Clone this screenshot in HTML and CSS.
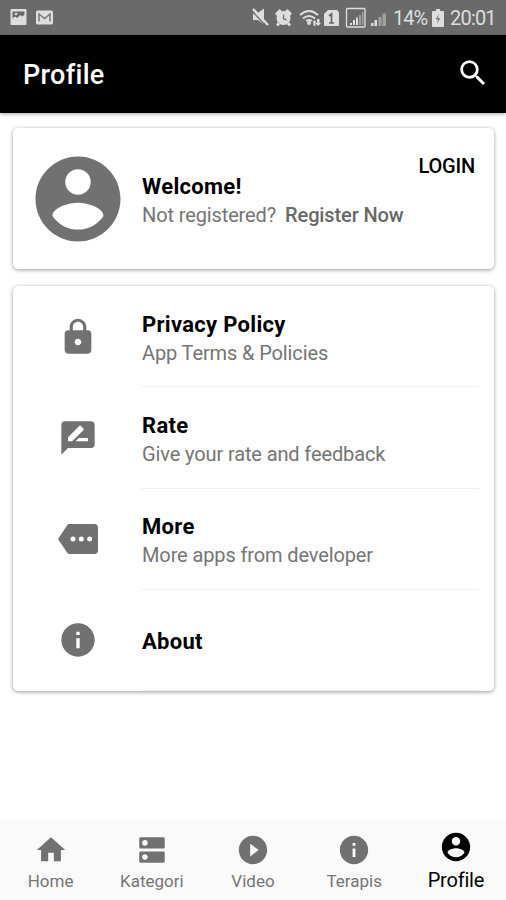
FILE: index.html
```html
<!DOCTYPE html>
<html lang="en">
<head>
<meta charset="utf-8">
<title>Profile</title>
<link rel="stylesheet" href="styles.css">
</head>
<body>
<div class="status">
  <svg class="notices" viewBox="0 0 44 16"><path fill="#dedede" fill-rule="evenodd" d="M1.500 0h14a1 1 0 0 1 1 1v14a1 1 0 0 1-1 1h-14a1 1 0 0 1-1-1v-14a1 1 0 0 1 1-1zM2.500 2.500v7l2.500-2 2 1.500 3.500-3 2 1.500 2-2V2.500z"/><circle cx="6" cy="5" r="1.300" fill="#dedede"/><rect x="26" y="1.500" width="17" height="14" rx="1.500" fill="#dedede"/><path d="M29 12.500V5l5.500 4.500L40 5v7.500" fill="none" stroke="#777" stroke-width="1.500"/></svg>
  <div class="indicators">
    <svg class="system" viewBox="0 0 136 22">
      <g fill="#dedede">
        <path d="M1 7.500h4L12 2.500v16l-6-4.500H1z"/>
        <circle cx="31.500" cy="12" r="7"/>
        <path d="M23 7.500 27.500 3l2.500 2-5 5zM40 7.500 35.500 3 33 5l5 5zM26 16l2 2.500-2 2L24 18.500zM37 16l-2 2.500 2 2 2-2z"/>
        <circle cx="57" cy="17" r="2"/>
        <path d="M65 13h2.500v4H69l-3 3-2.500-3H65zM61.500 20v-3.500H60.500l2-2.500 2 2.500h-1V20z"/>
        <path d="M76 4h9l2 2.500V19a1 1 0 0 1-1 1H73a1 1 0 0 1-1-1V8z"/>
        <path d="M98 17h2v2h-2zM101 14h2v5h-2zM104 11.500h2V19h-2zM119 17h2.500v3H119zM122.500 14h2.500v6h-2.500z"/>
      </g>
      <path d="M107 9h2v10h-2zM110 6h1.500v13H110zM126.500 11h3v9h-3zM130.500 7.500h3.500V20h-3.500z" fill="#a0a0a0"/>
      <path d="m0 5 14 15" stroke="#6a6a6a" stroke-width="1.200"/>
      <path d="m1 3 15 16" stroke="#dedede" stroke-width="2.400"/>
      <path d="M31.500 8.500v4l3 1.500" fill="none" stroke="#777" stroke-width="1.400"/>
      <path d="M48 9q9-8 18 0M51 12.500q6-5 12 0M54 15q3-2 6 0" fill="none" stroke="#dedede" stroke-width="2"/>
      <path d="m77 10 2.500-2v9M77 17h5" fill="none" stroke="#666" stroke-width="1.700"/>
      <rect x="94.500" y="2.500" width="18.500" height="18.500" rx="1" fill="none" stroke="#dedede" stroke-width="1.300"/>
    </svg>
    <span class="percent">14%</span>
    <svg class="battery" viewBox="0 0 12 18"><path fill="#dedede" d="M4 0h4v2h3q1 0 1 1v14q0 1-1 1H1q-1 0-1-1V3q0-1 1-1h3z"/><path d="m7 4.500-3.500 6H6L5 15l3.500-6H6z" fill="#808080"/></svg>
    <span class="clock">20:01</span>
  </div>
</div>
<header class="bar">
  <h1 class="bar-title">Profile</h1>
  <svg class="search" viewBox="0 0 24 24"><path d="M15.500 14h-.79l-.28-.27A6.471 6.471 0 0 0 16 9.500 6.500 6.500 0 1 0 9.500 16c1.610 0 3.090-.59 4.230-1.570l.27.28v.79l5 4.990L20.490 19l-4.990-5zm-6 0C7.010 14 5 11.990 5 9.500S7.010 5 9.500 5 14 7.010 14 9.500 11.990 14 9.500 14z"/></svg>
</header>
<main class="content">
  <section class="card account">
    <svg class="avatar" viewBox="0 0 24 24"><path d="M12 2C6.480 2 2 6.480 2 12s4.480 10 10 10 10-4.480 10-10S17.520 2 12 2zm0 3c1.660 0 3 1.340 3 3s-1.340 3-3 3-3-1.340-3-3 1.340-3 3-3zm0 14.200c-2.500 0-4.710-1.280-6-3.220.03-1.990 4-3.080 6-3.080 1.990 0 5.970 1.090 6 3.080-1.290 1.940-3.500 3.220-6 3.220z"/></svg>
    <div class="greeting">
      <h2 class="title">Welcome!</h2>
      <p class="sub"><span>Not registered?</span><b class="register">Register Now</b></p>
    </div>
    <span class="login">LOGIN</span>
  </section>
  <section class="card menu">
    <div class="row">
      <svg class="icon" viewBox="0 0 24 24"><path d="M18 8h-1V6c0-2.760-2.240-5-5-5S7 3.240 7 6v2H6c-1.100 0-2 .9-2 2v10c0 1.100.9 2 2 2h12c1.100 0 2-.9 2-2V10c0-1.100-.9-2-2-2zm-6 9c-1.100 0-2-.9-2-2s.9-2 2-2 2 .9 2 2-.9 2-2 2zm3.100-9H8.900V6c0-1.710 1.390-3.100 3.100-3.100 1.710 0 3.100 1.390 3.100 3.100v2z"/></svg>
      <div class="text"><h2 class="title">Privacy Policy</h2><p class="sub">App Terms &amp; Policies</p></div>
    </div>
    <div class="row">
      <svg class="icon" viewBox="0 0 24 24"><path d="M20 2H4c-1.100 0-1.990.9-1.990 2L2 22l4-4h14c1.100 0 2-.9 2-2V4c0-1.100-.9-2-2-2zM6 14v-2.470l6.880-6.880c.2-.2.510-.2.710 0l1.770 1.770c.2.2.2.510 0 .710L8.470 14H6zm12 0h-7.500l2-2H18v2z"/></svg>
      <div class="text"><h2 class="title">Rate</h2><p class="sub">Give your rate and feedback</p></div>
    </div>
    <div class="row">
      <svg class="icon" viewBox="0 0 24 24"><path fill-rule="evenodd" d="M22 3H7c-.69 0-1.230.35-1.590.88L0 12l5.410 8.110c.36.53.97.89 1.660.89H22c1.100 0 2-.9 2-2V5c0-1.100-.9-2-2-2zM9 13.500a1.500 1.500 0 1 1 0-3 1.500 1.500 0 0 1 0 3zm5 0a1.500 1.500 0 1 1 0-3 1.500 1.500 0 0 1 0 3zm5 0a1.500 1.500 0 1 1 0-3 1.500 1.500 0 0 1 0 3z"/></svg>
      <div class="text"><h2 class="title">More</h2><p class="sub">More apps from developer</p></div>
    </div>
    <div class="row">
      <svg class="icon" viewBox="0 0 24 24"><path d="M12 2C6.480 2 2 6.480 2 12s4.480 10 10 10 10-4.480 10-10S17.520 2 12 2zm1 15h-2v-6h2v6zm0-8h-2V7h2v2z"/></svg>
      <div class="text single"><h2 class="title">About</h2></div>
    </div>
  </section>
</main>
<nav class="tabs">
  <div class="tab"><svg class="tab-icon" viewBox="0 0 24 24"><path d="M10 20v-6h4v6h5v-8h3L12 3 2 12h3v8z"/></svg><span>Home</span></div>
  <div class="tab"><svg class="tab-icon" viewBox="0 0 24 24"><path d="M20 13H4c-.55 0-1 .45-1 1v6c0 .55.45 1 1 1h16c.55 0 1-.45 1-1v-6c0-.55-.45-1-1-1zM7 19c-1.100 0-2-.9-2-2s.9-2 2-2 2 .9 2 2-.9 2-2 2zM20 3H4c-.55 0-1 .45-1 1v6c0 .55.45 1 1 1h16c.55 0 1-.45 1-1V4c0-.55-.45-1-1-1zM7 9c-1.100 0-2-.9-2-2s.9-2 2-2 2 .9 2 2-.9 2-2 2z"/></svg><span>Kategori</span></div>
  <div class="tab"><svg class="tab-icon" viewBox="0 0 24 24"><path d="M12 2C6.480 2 2 6.480 2 12s4.480 10 10 10 10-4.480 10-10S17.520 2 12 2zm-2 14.500v-9l6 4.500-6 4.500z"/></svg><span>Video</span></div>
  <div class="tab"><svg class="tab-icon" viewBox="0 0 24 24"><path d="M12 2C6.480 2 2 6.480 2 12s4.480 10 10 10 10-4.480 10-10S17.520 2 12 2zm1 15h-2v-6h2v6zm0-8h-2V7h2v2z"/></svg><span>Terapis</span></div>
  <div class="tab active"><svg class="tab-icon" viewBox="0 0 24 24"><path d="M12 2C6.480 2 2 6.480 2 12s4.480 10 10 10 10-4.480 10-10S17.520 2 12 2zm0 3c1.660 0 3 1.340 3 3s-1.340 3-3 3-3-1.340-3-3 1.340-3 3-3zm0 14.200c-2.500 0-4.710-1.280-6-3.220.03-1.990 4-3.080 6-3.080 1.990 0 5.970 1.090 6 3.080-1.290 1.940-3.500 3.220-6 3.220z"/></svg><span>Profile</span></div>
</nav>
</body>
</html>
```
FILE: styles.css
```css
* { box-sizing: border-box; margin: 0; padding: 0; }
body {
  width: 506px;
  height: 900px;
  display: flex;
  flex-direction: column;
  overflow: hidden;
  background: #fff;
  font-family: Roboto, sans-serif;
  color: #000;
}
svg { display: block; flex: none; }
.status {
  height: 35px;
  display: flex;
  justify-content: space-between;
  padding: 0 11px 0 10px;
  background: #6a6a6a;
  color: #dedede;
}
.notices { width: 44px; height: 16px; margin-top: 9px; }
.indicators { display: flex; align-items: center; font-size: 20px; }
.system { width: 136px; height: 22px; margin-top: -1px; margin-right: 5px; }
.percent { width: 34px; margin-right: 5px; letter-spacing: -1px; }
.battery { width: 12px; height: 18px; margin-right: 6px; }
.clock { width: 45px; letter-spacing: -0.8px; }
.bar {
  height: 78px;
  display: flex;
  align-items: center;
  justify-content: space-between;
  padding: 0 16px 0 23px;
  background: #000;
  color: #fff;
  box-shadow: 0 1px 4px rgba(0, 0, 0, .35);
}
.bar-title { margin-top: 2px; font-size: 27px; font-weight: 500; letter-spacing: 0.3px; }
.search { width: 34px; height: 34px; margin-top: -2px; fill: #fff; }
.content { flex: 1; padding: 15px 12px 0 13px; display: flex; flex-direction: column; gap: 17px; }
.card { border-radius: 5px; background: #fff; box-shadow: 0 1px 4px rgba(0, 0, 0, .4); }
.account { height: 141px; display: flex; padding: 0 19px 0 14px; }
.avatar { width: 102px; height: 102px; margin-top: 20px; fill: #717171; }
.greeting { flex: 1; margin: 45px 0 0 13px; }
.title { font-size: 22px; line-height: 27px; font-weight: 700; letter-spacing: 0.3px; }
.sub { font-size: 20px; line-height: 30px; letter-spacing: -0.12px; color: #757575; white-space: nowrap; }
.register { margin-left: 9px; font-weight: 500; color: #686868; }
.login { margin-top: 26px; font-size: 20px; line-height: 24px; font-weight: 500; letter-spacing: -0.2px; }
.menu { height: 405px; padding-right: 15px; display: grid; grid-template-rows: repeat(4, 1fr); }
.row { display: flex; align-items: center; padding-left: 45px; }
.icon { width: 40px; height: 40px; fill: #717171; }
.text {
  flex: 1;
  height: 100%;
  display: flex;
  flex-direction: column;
  justify-content: center;
  margin-left: 43px;
  padding: 6px 0 0 1px;
  border-bottom: 1px solid #f0f0f0;
}
.single { padding-top: 3px; }
.tabs { height: 80px; display: grid; grid-template-columns: repeat(5, 1fr); background: #fafafa; color: #757575; font-size: 17px; }
.tab { display: flex; flex-direction: column; align-items: center; padding-top: 13px; }
.tab span { line-height: 20px; margin-top: 4px; }
.tab-icon { width: 34px; height: 34px; fill: #717171; }
.active { padding: 10px 0 0 1px; color: #000; font-size: 20px; }
.active span { line-height: 22px; margin-top: 5px; letter-spacing: -0.2px; }
.active .tab-icon { fill: #000; }
```
